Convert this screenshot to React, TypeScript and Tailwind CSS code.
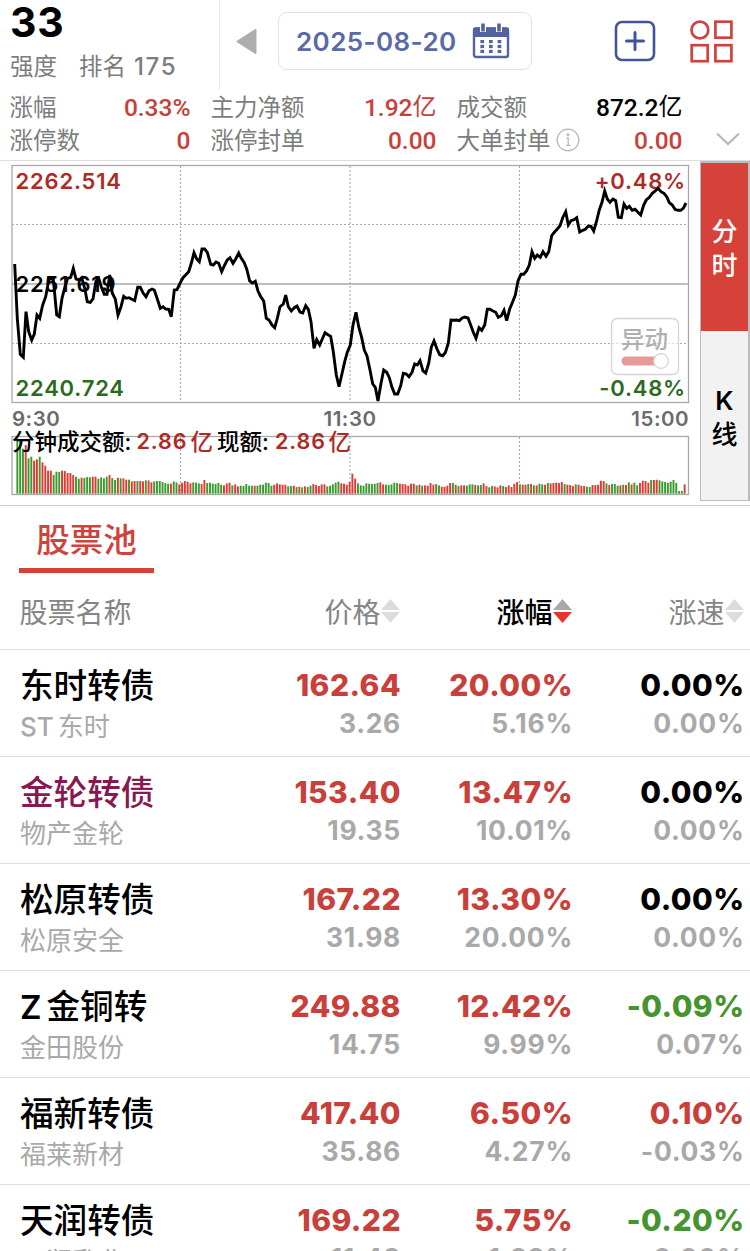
import type { ReactNode } from "react";

// chart drawings use a 3x grid so that the data can stay in whole numbers
const GRID = 3;

const priceSegments = [
  {
    offset: 0,
    points:
      "44,327 52,490 61,598 70,607 78,470 86,530 95,555 103,537 111,480 119,490 128,450 137,425 147,372 160,372 170,480 178,485 186,430 195,395 203,370 212,367 220,340 228,372 237,375 245,368 254,400 262,440 271,442 279,432 288,378 296,370 304,395 313,418 321,418 329,360 337,415 346,432 354,480 363,455 371,424 379,430 387,428 404,437 413,397 421,397 430,415 438,425 447,407 456,402 463,405 472,432 481,460 489,455 497,462 506,463 514,485 523,405 531,404 540,385 549,368 566,350 574,325 582,293 590,312 598,320 606,282 614,282 622,292 632,328 640,330 648,321 656,325 665,350 674,330 682,315 690,308",
  },
  {
    offset: 690,
    points:
      "9,325 17,312 26,294 34,310 42,322 50,342 59,378 67,384 76,379 84,408 92,425 101,438 109,490 117,495 126,510 134,518 142,490 150,455 160,447 167,420 175,455 184,468 193,458 201,453 210,471 218,474 227,452 235,463 243,500 252,580 260,554 269,570 277,552 285,533 294,539 302,544 310,590 319,660 327,695 335,660 344,620 352,592 361,570 369,510 378,472 386,515 395,548 403,585 411,603 420,645 428,687 436,697 444,738 452,690 461,645 470,652 478,668 486,697 494,717 503,717 512,692 520,655 529,657 537,665 546,652 554,627 562,630 570,617 579,648 587,654 596,625 604,577 612,558 621,582 629,599 638,602 646,593 655,565 663,495 671,496 680,495 688,497 697,489",
  },
  {
    offset: 1380,
    points:
      "14,486 24,489 32,510 40,532 48,550 57,518 65,526 74,510 82,463 90,463 99,468 107,472 115,487 124,482 132,466 140,497 149,462 158,440 166,420 174,378 183,358 191,358 200,347 208,330 216,290 224,310 232,300 241,307 249,290 258,304 266,290 275,242 283,232 292,222 300,212 308,188 317,170 325,210 333,197 342,194 350,188 359,231 368,226 376,223 385,213 393,214 401,228 410,197 418,165 426,142 434,108 442,132 450,142 459,132 467,137 475,187 484,188 492,147 500,160 508,154 517,166 525,163 534,172 542,180 551,150 559,135 568,127 577,115 586,108 594,100 603,110 612,115 620,125 628,143 637,150 645,163 653,166 662,166 670,160 678,144",
  },
];

const pricePoints = priceSegments
  .flatMap(({ offset, points }) =>
    points.split(" ").map((p) => {
      const [x, y] = p.split(",").map(Number);
      return `${((x + offset) / GRID).toFixed(1)},${((y - 18) / GRID).toFixed(1)}`;
    }),
  )
  .join(" ");

// positive = up minute (red), negative = down minute (green)
const volumes = [
  -161, -161, -135, 146, -106, -111, 99, 103, -111, 94, 84, 69, 69, -56, -66, -65, 69, 68, 62, 62,
  56, -51, -45, 48, -47, -50, -49, 51, 51, -45, -49, -46, -51, 56, -47, -41, 48, -46, 46, 42,
  -42, 37, 38, -38, 38, 37, -40, 40, 34, -37, -38, -38, -35, -32, -30, 30, -37, -34, 28, 33,
  38, 36, 31, -34, -33, -31, 29, 41, -32, -33, -30, -29, -32, -27, 25, 31, 33, -25, 28, 22,
  -24, -23, -29, -24, -24, 24, -24, -27, -27, -33, -32, -24, 27, 31, 28, 27, 27, -22, -23, 24,
  -20, 21, -19, 22, -20, -24, 29, 26, 23, 28, 28, -22, -24, -28, -33, -36, 31, 30, 27, 35,
  60, 45, -31, -25, -24, -31, -30, -29, -30, -32, 34, 28, -27, -26, -28, -33, -32, 30, 29, 28,
  24, 30, 30, -25, 27, -24, 25, 24, 32, 27, -29, -25, 21, 21, 24, 32, -32, 27, -23, 25,
  25, -24, -28, -28, 26, -25, -26, 31, 23, -19, -23, 22, 19, 25, -23, 20, 25, 20, 30, 35,
  -28, 27, 27, -29, 29, -25, 25, -30, -28, 27, -32, 31, 32, 33, 32, 35, -29, 27, 26, 23,
  -28, 27, 24, 23, -21, -20, 26, 26, 27, 39, 38, -31, 26, -29, -29, -24, 25, -27, 26, -34,
  28, -33, -25, 32, 39, 38, 33, -41, 41, 42, -40, -37, -35, -33, -36, -41, -32, -8, -8, 28,
];

type Tone = "red" | "green" | "black";

const toneClass: Record<Tone, string> = {
  red: "text-[#c9403a]",
  green: "text-[#46942f]",
  black: "text-black",
};

type Stock = {
  prefix?: string;
  name: string;
  nameColor?: string;
  subPrefix?: string;
  sub: string;
  price: [string, string];
  change: [string, string];
  speed: [string, string];
  speedTone: Tone;
};

const stocks: Stock[] = [
  { name: "东时转债", subPrefix: "ST", sub: "东时", price: ["162.64", "3.26"], change: ["20.00%", "5.16%"], speed: ["0.00%", "0.00%"], speedTone: "black" },
  { name: "金轮转债", nameColor: "text-[#86194f]", sub: "物产金轮", price: ["153.40", "19.35"], change: ["13.47%", "10.01%"], speed: ["0.00%", "0.00%"], speedTone: "black" },
  { name: "松原转债", sub: "松原安全", price: ["167.22", "31.98"], change: ["13.30%", "20.00%"], speed: ["0.00%", "0.00%"], speedTone: "black" },
  { prefix: "Z", name: "金铜转", sub: "金田股份", price: ["249.88", "14.75"], change: ["12.42%", "9.99%"], speed: ["-0.09%", "0.07%"], speedTone: "green" },
  { name: "福新转债", sub: "福莱新材", price: ["417.40", "35.86"], change: ["6.50%", "4.27%"], speed: ["0.10%", "-0.03%"], speedTone: "red" },
  { name: "天润转债", sub: "天润乳业", price: ["169.22", "11.48"], change: ["5.75%", "1.23%"], speed: ["-0.20%", "0.00%"], speedTone: "green" },
];

function CalendarIcon() {
  return (
    <svg width="38" height="36" viewBox="0 0 38 36" fill="none">
      <rect x="2" y="5.5" width="34" height="28.5" rx="2" stroke="#5363a0" strokeWidth="2.4" />
      <path d="M1 6.5a2 2 0 0 1 2-2h32a2 2 0 0 1 2 2V14H1z" fill="#5363a0" />
      <path d="M11 1v8M27 1v8" stroke="#fff" strokeWidth="6" />
      <path d="M11 .5v8M27 .5v8" stroke="#5363a0" strokeWidth="3.6" />
      {[17, 21.9, 26.8].map((y) =>
        [8.4, 17, 25.6].map((x) => <rect key={`${x}-${y}`} x={x} y={y} width="3.7" height="3.2" fill="#5363a0" />),
      )}
    </svg>
  );
}

function Header() {
  return (
    <header className="flex h-[90px]">
      <div className="w-[219.5px] border-r border-[#ececec] pl-[10px]">
        <div className="h-[46px] text-[41px] leading-[45px] font-bold tracking-[0.8px]">33</div>
        <div className="flex h-[42px] items-center text-[23.5px] text-[#7d7d7d]">
          <span>强度</span>
          <span className="ml-[22px]">排名</span>
          <span className="ml-2 text-[24px] font-medium tracking-[1.6px]">175</span>
        </div>
      </div>
      <div className="flex flex-1 pt-3">
        <svg className="mt-4 ml-4" width="21" height="27" viewBox="0 0 21 27">
          <path d="M1.5 13.5 19.5 2v23z" fill="#adadad" stroke="#adadad" strokeWidth="2" strokeLinejoin="round" />
        </svg>
        <div className="ml-[21.5px] flex h-[58px] w-[254px] items-center rounded-[9px] border border-[#e2e2e2] pl-[17px]">
          <span className="w-[162px] pt-px text-[26px] leading-[56px] font-semibold tracking-[0.4px] whitespace-nowrap text-[#5b6aa5]">
            2025-08-20
          </span>
          <span className="ml-[14px]">
            <CalendarIcon />
          </span>
        </div>
        <svg className="mt-2 ml-[82px]" width="42" height="42" viewBox="0 0 42 42" fill="none" stroke="#43559a" strokeWidth="2.6">
          <rect x="2" y="2" width="38" height="38" rx="6" />
          <path d="M21 12.5v17M12.5 21h17" strokeWidth="3" strokeLinecap="round" />
        </svg>
        <svg className="mt-2 ml-[34px]" width="43" height="43" viewBox="0 0 43 43" fill="none" stroke="#cd443f" strokeWidth="2.7">
          <circle cx="9.9" cy="10" r="8.4" />
          <rect x="25.4" y="1.7" width="16" height="16" />
          <rect x="1.7" y="25.2" width="16" height="16" />
          <rect x="25.4" y="25.2" width="16" height="16" />
        </svg>
      </div>
    </header>
  );
}

function Stat({ label, value, unit, tone }: { label: ReactNode; value: string; unit?: string; tone: Tone }) {
  return (
    <div className="flex h-[33px] items-center justify-between leading-[33px]">
      <span className="flex items-center text-[23.5px] text-[#7d7d7d]">{label}</span>
      <span className={`flex font-['Roboto','Noto_Sans_CJK_SC',sans-serif] text-[24.5px] font-medium ${toneClass[tone]}`}>
        {value}
        {unit && <span className="text-[24px] font-normal">{unit}</span>}
      </span>
    </div>
  );
}

function Stats() {
  return (
    <div className="flex h-[71px] border-b border-[#dedede] pt-px pl-[9.5px]">
      <div className="w-[181px]">
        <Stat label="涨幅" value="0.33%" tone="red" />
        <Stat label="涨停数" value="0" tone="red" />
      </div>
      <div className="ml-5 w-[226px]">
        <Stat label="主力净额" value="1.92" unit="亿" tone="red" />
        <Stat label="涨停封单" value="0.00" tone="red" />
      </div>
      <div className="ml-5 w-[226px]">
        <Stat label="成交额" value="872.2" unit="亿" tone="black" />
        <Stat
          label={
            <>
              大单封单
              <svg className="-mt-0.5 ml-[5px]" width="24" height="24" viewBox="0 0 24 24" fill="none" stroke="#b9b9b9" strokeWidth="1.3">
                <circle cx="12" cy="12" r="10.8" />
                <path d="M10.4 10h1.8v7.3M10 17.3h4.4" />
                <circle cx="12" cy="6.8" r=".8" fill="#b9b9b9" />
              </svg>
            </>
          }
          value="0.00"
          tone="red"
        />
      </div>
      <svg className="mt-[41px] ml-[33.5px]" width="24" height="14" viewBox="0 0 24 14" fill="none">
        <path d="M1 1.5 12 12 23 1.5" stroke="#b5b5b5" strokeWidth="2" />
      </svg>
    </div>
  );
}

function MinuteChart() {
  return (
    <svg className="font-['Inter','Noto_Sans_CJK_SC',sans-serif]" width="700" height="344" viewBox="0 0 700 344">
      <g fill="none" stroke="#a9a9a9" strokeWidth="1.3">
        <rect x="12" y="4.5" width="676.5" height="237" />
        <path d="M12 123h676" />
        <rect x="12" y="275.5" width="676.5" height="58" />
        <path
          d="M12 63.5h676M12 182.5h676M180.5 5v237M350 5v237M519.5 5v237M180.5 276v57M350 276v57M519.5 276v57"
          strokeDasharray="2 2"
          strokeWidth="1.1"
        />
      </g>

      {volumes.map((v, i) => (
        <rect
          key={i}
          x={16.4 + i * 2.792}
          y={332.7 - Math.abs(v) / GRID}
          width="1.9"
          height={Math.abs(v) / GRID}
          fill={v > 0 ? "#dd3b33" : "#3a9a2b"}
        />
      ))}

      <g fontSize="22" fontWeight="600" letterSpacing=".8">
        <text x="15.5" y="27.5" fill="#b02a25">2262.514</text>
        <text x="15.5" y="131">2251.619</text>
        <text x="15.5" y="234.5" fill="#2d6a1e">2240.724</text>
        <text x="686" y="27.5" textAnchor="end" fill="#b02a25">+0.48%</text>
        <text x="686" y="234.5" textAnchor="end" fill="#2d6a1e">-0.48%</text>
      </g>
      <g fontSize="20.5" fontWeight="600" fill="#6b6b6b" letterSpacing=".5">
        <text x="12" y="264.5">9:30</text>
        <text x="350" y="264.5" textAnchor="middle">11:30</text>
        <text x="689" y="264.5" textAnchor="end">15:00</text>
      </g>
      <g fontSize="22.5" fontWeight="500">
        <text x="12" y="288.5">分钟成交额:</text>
        <text x="136.5" y="288" fontSize="21.5" fontWeight="600" fill="#b02a25" letterSpacing=".9">2.86</text>
        <text x="190.5" y="288.5" fill="#b02a25">亿</text>
        <text x="217" y="288.5">现额:</text>
        <text x="275" y="288" fontSize="21.5" fontWeight="600" fill="#b02a25" letterSpacing=".9">2.86</text>
        <text x="328.5" y="288.5" fill="#b02a25">亿</text>
      </g>

      <polyline points={pricePoints} fill="none" stroke="#000" strokeWidth="2.9" strokeLinejoin="miter" />

      {/* 异动 switch */}
      <g>
        <rect x="611.5" y="157.5" width="67" height="56" rx="6" fill="#fff" fillOpacity=".6" stroke="#d4d4d4" strokeWidth="1.3" />
        <text x="644.5" y="186.5" textAnchor="middle" fontSize="23.5" fill="#b0b0b0" fontWeight="500">异动</text>
        <rect x="621.5" y="195.5" width="42" height="9" rx="4.5" fill="#e49c98" />
        <circle cx="661" cy="200" r="7.3" fill="#fff" stroke="#d4d4d4" strokeWidth="1.3" />
      </g>
    </svg>
  );
}

function SideTabs() {
  return (
    <div className="flex h-[340px] w-[50px] flex-col border-t-2 border-r-2 border-b border-l border-[#bcbcbc] text-center text-[26px] leading-[34px] font-medium">
      <button className="flex h-[168px] flex-col items-center justify-center bg-[#d6413a] pt-[3px] text-white">
        <span>分</span>
        <span>时</span>
      </button>
      <button className="flex flex-1 flex-col items-center justify-center bg-[#f2f2f2] pt-1 text-black">
        <span className="font-semibold">K</span>
        <span>线</span>
      </button>
    </div>
  );
}

function SortArrows({ active }: { active?: boolean }) {
  return (
    <svg width="19" height="24" viewBox="0 0 19 24">
      <path d="M9.5 0 19 11H0z" fill={active ? "#a9a9a9" : "#dcdcdc"} />
      <path d="M0 13h19l-9.5 11z" fill={active ? "#e8352b" : "#dcdcdc"} />
    </svg>
  );
}

function Column({ label, width, active }: { label: string; width: string; active?: boolean }) {
  return (
    <div className={`flex items-center justify-end ${width} ${active ? "font-medium text-black" : ""}`}>
      <span className="pt-1">{label}</span>
      <SortArrows active={active} />
    </div>
  );
}

function Cell({ values, tone, width }: { values: [string, string]; tone: Tone; width: string }) {
  return (
    <div className={`text-right ${width}`}>
      <div className={`-mr-px text-[30px] leading-[39px] font-extrabold tracking-[0.45px] ${toneClass[tone]}`}>{values[0]}</div>
      <div className="-mr-px text-[26.5px] leading-[37px] font-bold tracking-[0.7px] text-[#a9a9a9]">{values[1]}</div>
    </div>
  );
}

function StockRow({ stock }: { stock: Stock }) {
  return (
    <div className="flex h-[107px] border-t border-[#dedede] pt-4 pl-5">
      <div className="w-[180px] pt-px">
        <div className={`flex h-[38px] items-center text-[33.6px] leading-[38px] font-medium ${stock.nameColor ?? "text-black"}`}>
          {stock.prefix && <span className="mr-[5px] text-[33px] font-semibold">{stock.prefix}</span>}
          {stock.name}
        </div>
        <div className="mt-[3px] flex h-[38px] items-center text-[26px] leading-[38px] text-[#a9a9a9]">
          {stock.subPrefix && <span className="mr-1 font-medium">{stock.subPrefix}</span>}
          {stock.sub}
        </div>
      </div>
      <Cell values={stock.price} tone="red" width="w-[200px]" />
      <Cell values={stock.change} tone="red" width="w-[172px]" />
      <Cell values={stock.speed} tone={stock.speedTone} width="w-[171.5px]" />
    </div>
  );
}

export default function App() {
  return (
    <div className="h-[1251px] w-[750px] overflow-hidden bg-white font-['Inter','Noto_Sans_CJK_SC',sans-serif] text-black">
      <Header />
      <Stats />
      <section className="flex h-[345px] border-b border-[#cfcfcf]">
        <MinuteChart />
        <SideTabs />
      </section>

      <div className="flex h-[67px] pl-[19px]">
        <div className="h-full w-[135px] border-b-[5px] border-[#d6413a] text-center text-[33.5px] leading-[68px] font-medium text-[#d0423b]">
          股票池
        </div>
      </div>

      <div className="flex h-[76px] items-center pl-[19.5px] text-[28px] leading-[76px] text-[#858585]">
        <span className="w-[180px] pt-1">股票名称</span>
        <Column label="价格" width="w-[200px]" />
        <Column label="涨幅" width="w-[172px]" active />
        <Column label="涨速" width="w-[172px]" />
      </div>

      {stocks.map((stock) => (
        <StockRow key={stock.name} stock={stock} />
      ))}
    </div>
  );
}
